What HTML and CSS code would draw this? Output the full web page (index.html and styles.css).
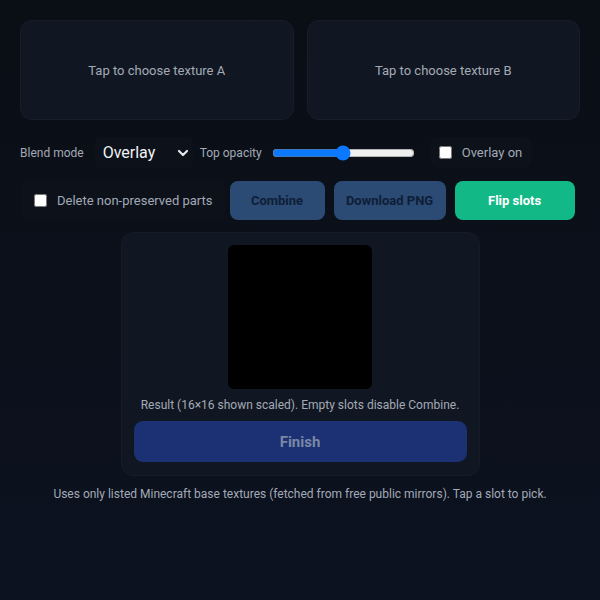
FILE: index.html
```html
<!DOCTYPE html>
<html lang="en">
<head>
<meta charset="UTF-8">
<meta name="viewport" content="width=device-width,initial-scale=1.0">
<title>Texture Blender</title>
<link rel="stylesheet" href="styles.css">
</head>
<body>
<div class="app">
	<div class="slots">
		<div class="slot">Tap to choose texture A</div>
		<div class="slot">Tap to choose texture B</div>
	</div>

	<div class="row">
		<label class="lbl" for="mode">Blend mode</label>
		<div class="select-wrap">
			<select id="mode" class="select">
				<option>Overlay</option>
				<option>Multiply</option>
				<option>Screen</option>
			</select>
			<svg class="chev" width="12" height="8" viewBox="0 0 12 8"><path d="M2 2l4 4 4-4" fill="none" stroke="#e5e7eb" stroke-width="2.2" stroke-linecap="round" stroke-linejoin="round"/></svg>
		</div>
		<label class="lbl" for="op">Top opacity</label>
		<input id="op" class="range" type="range" min="0" max="100" value="50">
		<label class="check check-sm"><input type="checkbox"> <span>Overlay on</span></label>
	</div>

	<div class="row row-btns">
		<label class="check check-lg"><input type="checkbox"> <span>Delete non-preserved parts</span></label>
		<button class="btn btn-dim btn-combine">Combine</button>
		<button class="btn btn-dim btn-dl">Download PNG</button>
		<button class="btn btn-go btn-flip">Flip slots</button>
	</div>

	<div class="result">
		<div class="canvas"></div>
		<p class="cap">Result (16×16 shown scaled). Empty slots disable Combine.</p>
		<button class="finish">Finish</button>
	</div>

	<p class="foot">Uses only listed Minecraft base textures (fetched from free public mirrors). Tap a slot to pick.</p>
</div>
</body>
</html>
```

FILE: styles.css
```css
html,body { margin:0; padding:0; }
html,body { width:100%; height:100%; }
body { background:linear-gradient(180deg,#0a0e15 0%,#0c1220 100%); font-family:Roboto,"Liberation Sans",sans-serif; color:#d1d5db; }

.app{ padding:20px; }

.slots{ display:grid; grid-template-columns:1fr 1fr; gap:13px; }
.slot{ height:98px; border:1px solid #171e29; border-radius:12px; background:#111722; display:flex; align-items:center; justify-content:center; font-size:13px; color:#a3aab6; }

.row{ display:flex; align-items:center; gap:7px; margin-top:17px; height:31px; }
.lbl{ font-size:12px; color:#a3aab6; }

.select-wrap{ position:relative; width:98px; height:31px; margin-left:4px; }
.select{ -webkit-appearance:none; appearance:none; width:100%; height:100%; border:0; border-radius:6px; background:#0c111a; color:#f1f3f5; font-family:inherit; font-size:16px; padding:0 0 0 8px; outline:none; }
.chev{ position:absolute; right:4px; top:12px; pointer-events:none; }

.range{ width:143px; margin:0 8px 0 3px; accent-color:#0a78ff; }

.check{ display:flex; align-items:center; gap:10px; background:#0c111a; border-radius:8px; font-size:12.5px; color:#a3aab6; }
.check input{ width:13px; height:13px; margin:0; }
.check-sm{ height:31px; padding:0 10px 0 9px; font-size:13px; }
.check-lg{ height:40px; padding:0 12px 0 12px; font-size:13px; margin-left:2px; }

.row-btns{ margin-top:12px; height:40px; gap:9px; }
.row-btns .check-lg{ margin-right:-4px; }
.btn{ height:39px; border:0; border-radius:8px; font-family:inherit; font-size:13px; font-weight:700; padding:0; }
.btn-dim{ background:#2b4a74; color:#0e1e36; }
.btn-go{ background:#12b886; color:#fff; }
.btn-combine{ width:95px; }
.btn-dl{ width:112px; }
.btn-flip{ width:120px; }

.result{ width:333px; margin:12px auto 0; padding:12px 12px 13px; background:#111722; border:1px solid #151c27; border-radius:12px; display:flex; flex-direction:column; align-items:center; }
.canvas{ width:144px; height:144px; background:#000; border-radius:6px; }
.cap{ margin:9px 0 9px; font-size:12px; color:#a3aab6; }
.finish{ width:100%; height:41px; border:0; border-radius:9px; background:#1b3174; color:#7a88a6; font-family:inherit; font-size:15px; font-weight:700; }

.foot{ margin:11px 0 0; text-align:center; font-size:12px; color:#a3aab6; }
```
